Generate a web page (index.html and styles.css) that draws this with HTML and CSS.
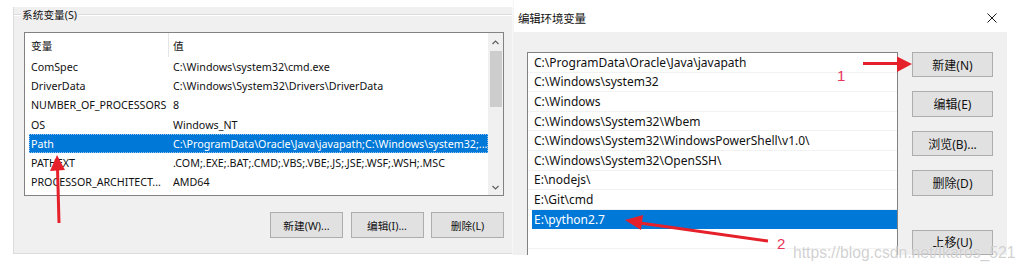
FILE: index.html
```html
<!DOCTYPE html>
<html lang="zh-CN">
<head>
<meta charset="utf-8">
<title>环境变量</title>
<link rel="stylesheet" href="styles.css">
</head>
<body>
<div class="page">
  <section class="left">
    <div class="panel">
      <div class="group-title"><span class="gt-line short"></span><span class="gt-text">系统变量(S)</span><span class="gt-line long"></span></div>
      <div class="listbox">
        <div class="lv">
          <div class="lv-head"><div class="h1">变量</div><div class="h2">值</div></div>
          <div class="lv-row"><div class="c1">ComSpec</div><div class="c2">C:\Windows\system32\cmd.exe</div></div>
          <div class="lv-row"><div class="c1">DriverData</div><div class="c2">C:\Windows\System32\Drivers\DriverData</div></div>
          <div class="lv-row"><div class="c1">NUMBER_OF_PROCESSORS</div><div class="c2">8</div></div>
          <div class="lv-row"><div class="c1">OS</div><div class="c2">Windows_NT</div></div>
          <div class="lv-row sel"><div class="c1">Path</div><div class="c2">C:\ProgramData\Oracle\Java\javapath;C:\Windows\system32;...</div></div>
          <div class="lv-row"><div class="c1">PATHEXT</div><div class="c2">.COM;.EXE;.BAT;.CMD;.VBS;.VBE;.JS;.JSE;.WSF;.WSH;.MSC</div></div>
          <div class="lv-row"><div class="c1">PROCESSOR_ARCHITECT...</div><div class="c2">AMD64</div></div>
        </div>
        <div class="vscroll">
          <svg class="sb-arrow" width="15" height="15" viewBox="0 0 15 15"><path d="M4.5 9 L7.5 6 L10.5 9" fill="none" stroke="#606060" stroke-width="1.2"/></svg>
          <div class="sb-track"><div class="sb-thumb"></div></div>
          <svg class="sb-arrow" width="15" height="15" viewBox="0 0 15 15"><path d="M4.5 6 L7.5 9 L10.5 6" fill="none" stroke="#606060" stroke-width="1.2"/></svg>
        </div>
      </div>
      <div class="btn-row">
        <button class="btn w73">新建(W)...</button>
        <button class="btn w73">编辑(I)...</button>
        <button class="btn w73">删除(L)</button>
      </div>
    </div>
  </section>
  <section class="right">
    <div class="titlebar">
      <span class="title">编辑环境变量</span>
      <svg class="close" width="12" height="12" viewBox="0 0 12 12"><path d="M1.5 1.5 L10.5 10.5 M10.5 1.5 L1.5 10.5" stroke="#1a1a1a" stroke-width="1"/></svg>
    </div>
    <div class="dlg-body">
      <div class="pathlist">
        <div class="pl-row">C:\ProgramData\Oracle\Java\javapath</div>
        <div class="pl-row">C:\Windows\system32</div>
        <div class="pl-row">C:\Windows</div>
        <div class="pl-row">C:\Windows\System32\Wbem</div>
        <div class="pl-row">C:\Windows\System32\WindowsPowerShell\v1.0\</div>
        <div class="pl-row">C:\Windows\System32\OpenSSH\</div>
        <div class="pl-row">E:\nodejs\</div>
        <div class="pl-row">E:\Git\cmd</div>
        <div class="pl-row sel">E:\python2.7</div>
        <div class="pl-row"></div>
      </div>
      <div class="btn-col">
        <button class="btn w81">新建(N)</button>
        <button class="btn w81">编辑(E)</button>
        <button class="btn w81">浏览(B)...</button>
        <button class="btn w81">删除(D)</button>
        <button class="btn w81 gap-top">上移(U)</button>
      </div>
    </div>
  </section>

  <svg class="annot" width="1023" height="273" viewBox="0 0 1023 273">
    <g fill="#e5202b" stroke="#e5202b">
      <line x1="59" y1="223" x2="57.5" y2="168" stroke-width="3"/>
      <polygon points="57,155 50,171 65,170" stroke="none"/>
      <line x1="863" y1="63.5" x2="899" y2="63.5" stroke-width="3"/>
      <polygon points="912,64 897,56.5 897,72" stroke="none"/>
      <line x1="768" y1="241" x2="640" y2="223" stroke-width="3"/>
      <polygon points="625,220 643,215 641,230" stroke="none"/>
    </g>
    <text x="837" y="81" class="num">1</text>
    <text x="777" y="249" class="num">2</text>
  </svg>
  <div class="watermark">https://blog.csdn.net/Ikaros_521</div>
</div>
</body>
</html>
```

FILE: styles.css
```css
* { box-sizing: border-box; }
html, body { margin: 0; padding: 0; background: #fff; }
body {
  font-family: "Noto Sans", "Noto Sans CJK SC", sans-serif;
  font-size: 12px;
  color: #111;
}
.page {
  position: relative;
  width: 1023px;
  height: 273px;
  overflow: hidden;
  display: flex;
}

/* left window (slightly smaller scale) */
.left {
  width: 513px;
  padding: 7px 0 0 13px;
  font-size: 10.7px;
}
.panel {
  width: 500px;
  height: 247px;
  background: #f0f0f0;
  border-left: 1px solid #dcdcdc;
  border-bottom: 1px solid #dcdcdc;
  border-right: 1px solid #f7f7f7;
  display: flex;
  flex-direction: column;
  padding-left: 10px;
}
.group-title {
  display: flex;
  align-items: center;
  height: 16px;
  margin-left: -10px;
}
.gt-line { height: 2px; border-top: 1px solid #dcdcdc; border-bottom: 1px solid #fff; }
.gt-line.short { width: 7px; }
.gt-line.long { flex: 1; }
.gt-text { padding: 0 1px; line-height: 16px; }

.listbox {
  margin-top: 9px;
  width: 480px;
  height: 164px;
  border: 1px solid #828282;
  background: #fff;
  display: flex;
}
.lv { flex: 1; min-width: 0; padding-left: 4px; }
.lv-head { display: flex; height: 24px; align-items: stretch; }
.lv-head .h1 {
  width: 140px;
  padding-left: 2px;
  border-right: 1px solid #e5e5e5;
  display: flex; align-items: center;
}
.lv-head .h2 { padding-left: 4px; display: flex; align-items: center; }
.lv-row {
  display: flex;
  height: 19.3px;
  align-items: center;
  white-space: nowrap;
}
.lv-row .c1 { width: 142px; flex: none; padding-left: 2px; overflow: hidden; }
.lv-row .c2 { flex: 1; min-width: 0; padding-left: 2px; overflow: hidden; }
.lv-row.sel { background: #0078d7; color: #fff; outline: 1px dotted rgba(255,255,255,.55); outline-offset: -1px; }

.vscroll {
  width: 15px;
  flex: none;
  background: #f0f0f0;
  display: flex;
  flex-direction: column;
}
.sb-arrow { display: block; flex: none; margin-top: 2px; }
.sb-track { flex: 1; padding: 1px 1px 0 2px; }
.sb-thumb { height: 56px; background: #cdcdcd; }

.btn-row {
  display: flex;
  justify-content: flex-end;
  gap: 7.5px;
  margin-top: 16px;
  width: 480px;
}
.btn {
  font: inherit;
  color: #111;
  background: #e1e1e1;
  border: 1px solid #adadad;
  height: 26px;
  padding: 0;
}
.w73 { width: 73px; }
.w81 { width: 81px; }

/* right dialog */
.right {
  width: 510px;
  display: flex;
  flex-direction: column;
}
.titlebar {
  height: 32px;
  display: flex;
  align-items: center;
  justify-content: space-between;
  padding: 0 25px 0 4px;
  border-left: 1px solid #f4f4f4;
}
.title { font-size: 11.5px; letter-spacing: -0.2px; margin-top: 4px; }
.close { margin-top: 4px; }
.dlg-body {
  width: 494px;
  height: 223px;
  background: #f0f0f0;
  display: flex;
  padding: 20px 0 0 14px;
  overflow: hidden;
}
.pathlist {
  width: 371px;
  height: 240px;
  border: 1px solid #828282;
  background: #fff;
  flex: none;
}
.pl-row {
  height: 19.6px;
  padding-left: 6px;
  display: flex;
  align-items: center;
  border-bottom: 1px solid #f2f2f2;
  white-space: nowrap;
}
.pl-row.sel {
  background: #0078d7;
  color: #fff;
  margin-left: 4px;
  padding-left: 2px;
  border-bottom-color: #0078d7;
}
.btn-col {
  display: flex;
  flex-direction: column;
  gap: 14px;
  margin-left: 14px;
}
.btn-col .gap-top { margin-top: 20px; }

/* annotations */
.annot {
  position: absolute;
  left: 0; top: 0;
  pointer-events: none;
}
.num {
  font-family: "Liberation Sans", Arial, sans-serif;
  font-size: 15px;
  fill: #e8335a;
}
.watermark {
  position: absolute;
  left: 793px;
  top: 244px;
  font-family: "Liberation Sans", Arial, sans-serif;
  font-size: 15.7px;
  color: rgba(170,170,170,.55);
  text-shadow: 0 0 1px #fff;
  white-space: nowrap;
}
```
